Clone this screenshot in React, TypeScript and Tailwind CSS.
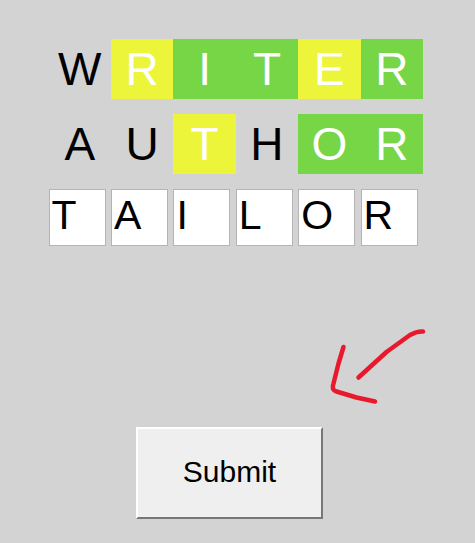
import React from "react";

type Tone = "none" | "yellow" | "green";

interface Guess {
  word: string;
  tones: Tone[];
}

const guesses: Guess[] = [
  { word: "WRITER", tones: ["none", "yellow", "green", "green", "yellow", "green"] },
  { word: "AUTHOR", tones: ["none", "none", "yellow", "none", "green", "green"] },
];

const toneClass: Record<Tone, string> = {
  none: "text-black",
  yellow: "bg-[#ecf53a] text-white",
  green: "bg-[#76d645] text-white",
};

const GuessRow = ({ word, tones }: Guess) => (
  <div className="grid grid-cols-[repeat(6,62.4px)] h-[60px]">
    {word.split("").map((ch, i) => (
      <div
        key={i}
        className={`flex items-center justify-center text-[46px] leading-none ${toneClass[tones[i]]}`}
      >
        {ch}
      </div>
    ))}
  </div>
);

const InputRow = ({ value }: { value: string }) => (
  <div className="grid grid-cols-[repeat(6,62.4px)] h-[57px]">
    {value.split("").map((ch, i) => (
      <input
        key={i}
        readOnly
        value={ch}
        className="w-[57px] h-[57px] bg-white border-[1.5px] border-[#b4b4b4] pl-[2px] pb-[3px] text-[41px] text-black outline-none"
        style={{ fontFamily: '"Liberation Sans", Arial, sans-serif' }}
      />
    ))}
  </div>
);

export default function App() {
  return (
    <div
      className="relative w-full h-[543px] bg-[#d3d3d3] overflow-hidden"
      style={{ fontFamily: '"Liberation Sans", Arial, sans-serif' }}
    >
      <div className="pt-[39px] pl-[48.6px] flex flex-col gap-[15px]">
        {guesses.map((g) => (
          <GuessRow key={g.word} {...g} />
        ))}
        <InputRow value="TAILOR" />
      </div>

      <div className="pl-[136px] mt-[181px]">
        <button className="w-[187px] h-[92px] pb-[3px] bg-[#efefef] border-2 border-t-white border-l-white border-r-[#777] border-b-[#777] text-[30px] text-black">
          Submit
        </button>
      </div>

      {/* hand-drawn arrow */}
      <svg
        className="absolute left-0 top-0 pointer-events-none"
        width="475"
        height="543"
        viewBox="0 0 475 543"
      >
        <g fill="none" stroke="#e8192c" strokeWidth="4.5" strokeLinecap="round" strokeLinejoin="round">
          <path d="M423 331.5 Q417 331 410 335 L386.5 352 L358.5 377.5" />
          <path d="M343.5 347 L338.5 363.5 L333.5 383.5 Q331 390 336.5 391.5 L356.5 397.5 L375 401.5" />
        </g>
      </svg>
    </div>
  );
}
